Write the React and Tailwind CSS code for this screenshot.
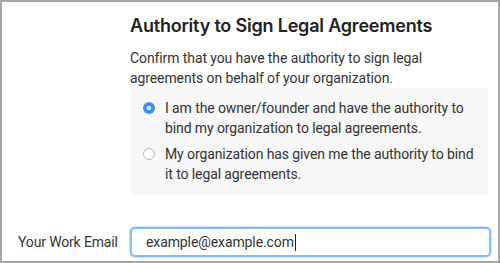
import { useState } from 'react';

const options = [
  {
    id: 'owner',
    lines: ['I am the owner/founder and have the authority to', 'bind my organization to legal agreements.'],
  },
  {
    id: 'delegated',
    lines: ['My organization has given me the authority to bind', 'it to legal agreements.'],
  },
];

const Radio = ({ checked }) =>
  checked ? (
    <span className="mt-[4px] flex h-[12px] w-[12px] shrink-0 items-center justify-center rounded-full bg-[#3b92f6]">
      <span className="h-[4px] w-[4px] rounded-full bg-white" />
    </span>
  ) : (
    <span className="mt-[4px] h-[12px] w-[12px] shrink-0 rounded-full border border-[#b4b4b4] bg-white" />
  );

export default function App() {
  const [selected, setSelected] = useState('owner');

  return (
    <div className="h-[263px] w-[500px] overflow-hidden border-2 border-[#a6a6a6] bg-white font-['Roboto',sans-serif] text-[#333]">
      <div className="flex pt-[12px]">
        <div className="w-[128px] shrink-0" />
        <div className="w-[358px]">
          <h2 className="font-['Inter',sans-serif] text-[18px] leading-[24px] font-semibold tracking-[-0.2px] text-[#222]">
            Authority to Sign Legal Agreements
          </h2>
          <p className="mt-[10px] text-[14px] leading-[20px] tracking-[-0.1px]">
            Confirm that you have the authority to sign legal
            <br />
            agreements on behalf of your organization.
          </p>

          {/* Options */}
          <div className="flex flex-col gap-[6px] bg-[#f7f7f7] pt-[10px] pr-[8px] pb-[11px] pl-[13px]">
            {options.map((opt) => (
              <button
                key={opt.id}
                onClick={() => setSelected(opt.id)}
                className="flex items-start gap-[10px] text-left text-[14px] leading-[20px] tracking-[-0.1px] whitespace-nowrap"
              >
                <Radio checked={selected === opt.id} />
                <span>
                  {opt.lines[0]}
                  <br />
                  {opt.lines[1]}
                </span>
              </button>
            ))}
          </div>
        </div>
      </div>

      <div className="mt-[32px] flex items-center">
        <label className="w-[128px] shrink-0 pl-[16px] text-[14px] tracking-[-0.15px]">Your Work Email</label>
        <div className="flex h-[30px] w-[361px] items-center rounded-[5px] border-2 border-[#86bdf0] bg-white px-[14px] text-[14px] tracking-[-0.1px] shadow-[0_0_0_1px_#cfe4f8]">
          <span>example@example.com</span>
          <span className="ml-px h-[17px] w-px bg-[#222]" />
        </div>
      </div>
    </div>
  );
}
